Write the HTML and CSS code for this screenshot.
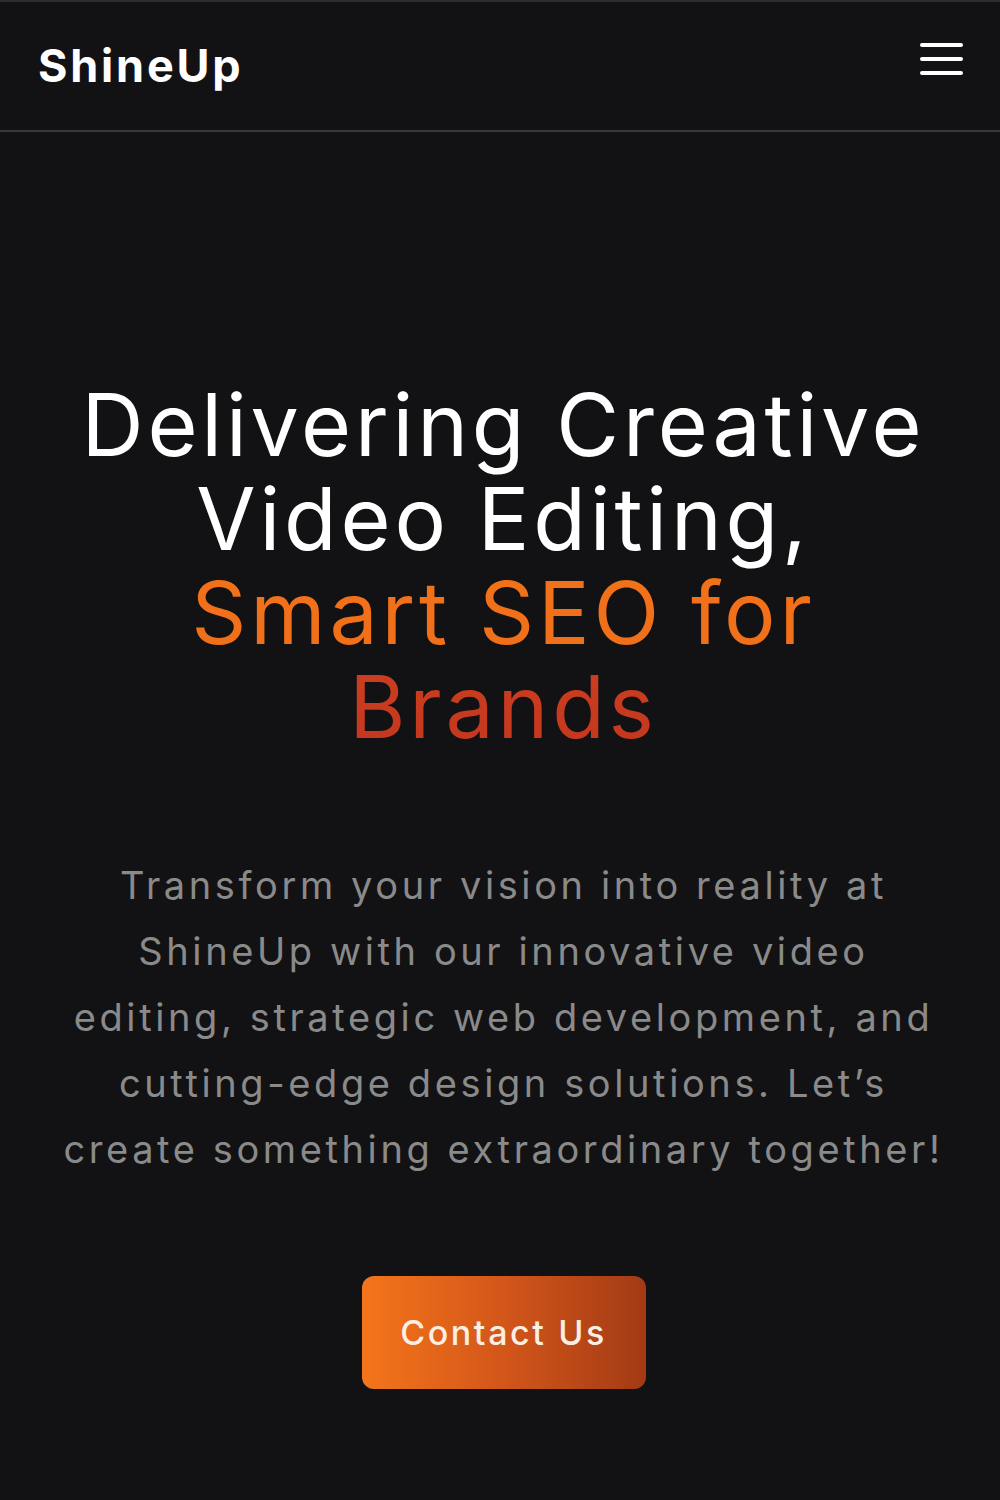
FILE: index.html
```html
<!DOCTYPE html>
<html lang="en">
<head>
<meta charset="utf-8">
<title>ShineUp</title>
<link rel="stylesheet" href="styles.css">
</head>
<body>
<header class="site-header">
  <a class="logo" href="#">ShineUp</a>
  <button class="menu-btn" aria-label="Menu">
    <span class="bar"></span><span class="bar"></span><span class="bar"></span>
  </button>
</header>
<main class="hero">
  <h1 class="hero-title">Delivering Creative<br>Video Editing,<br><span class="accent">Smart SEO for<br>Brands</span></h1>
  <p class="hero-text">Transform your vision into reality at<br>ShineUp with our innovative video<br>editing, strategic web development, and<br>cutting-edge design solutions. Let’s<br>create something extraordinary together!</p>
  <a class="cta" href="#">Contact Us</a>
</main>
</body>
</html>
```
FILE: styles.css
```css
* { box-sizing: border-box; }
html, body {
  margin: 0;
  padding: 0;
  background: #121214;
}
body {
  font-family: "Inter", "Liberation Sans", sans-serif;
  color: #fff;
  min-height: 1500px;
  border-top: 2px solid #2e2e30;
}
.site-header {
  height: 130px;
  display: flex;
  align-items: center;
  justify-content: space-between;
  padding: 0 36px 0 38px;
  border-bottom: 2px solid #38383a;
}
.logo {
  color: #fff;
  text-decoration: none;
  font-weight: 700;
  font-size: 45px;
  letter-spacing: 2.8px;
  margin-top: -2px;
}
.menu-btn {
  background: none;
  border: 0;
  padding: 0;
  width: 44px;
  display: flex;
  flex-direction: column;
  gap: 10px;
  margin-top: -14px;
}
.menu-btn .bar {
  display: block;
  height: 4px;
  width: 43px;
  background: #fff;
  border-radius: 2px;
}
.hero {
  display: flex;
  flex-direction: column;
  align-items: center;
  text-align: center;
  padding: 246px 20px 0 27px;
}
.hero-title {
  margin: 0;
  font-weight: 400;
  font-size: 86px;
  line-height: 94px;
  letter-spacing: 3.8px;
  color: #fff;
  white-space: nowrap;
}
.accent {
  display: block;
  background: linear-gradient(180deg, #f27219 0%, #f06f1a 46%, #cb3d20 58%, #c3371f 100%);
  -webkit-background-clip: text;
  background-clip: text;
  color: transparent;
}
.hero-text {
  margin: 98px 0 0;
  font-size: 38px;
  line-height: 66px;
  letter-spacing: 3.6px;
  color: #8a8a8a;
  font-weight: 400;
  white-space: nowrap;
}
.cta {
  margin-top: 94px;
  width: 284px;
  height: 113px;
  display: flex;
  align-items: center;
  justify-content: center;
  border-radius: 12px;
  background: linear-gradient(90deg, #f4751a 0%, #d3561a 50%, #a23a14 100%);
  color: #fbeee2;
  text-decoration: none;
  font-size: 34px;
  font-weight: 500;
  letter-spacing: 2.6px;
}
```
